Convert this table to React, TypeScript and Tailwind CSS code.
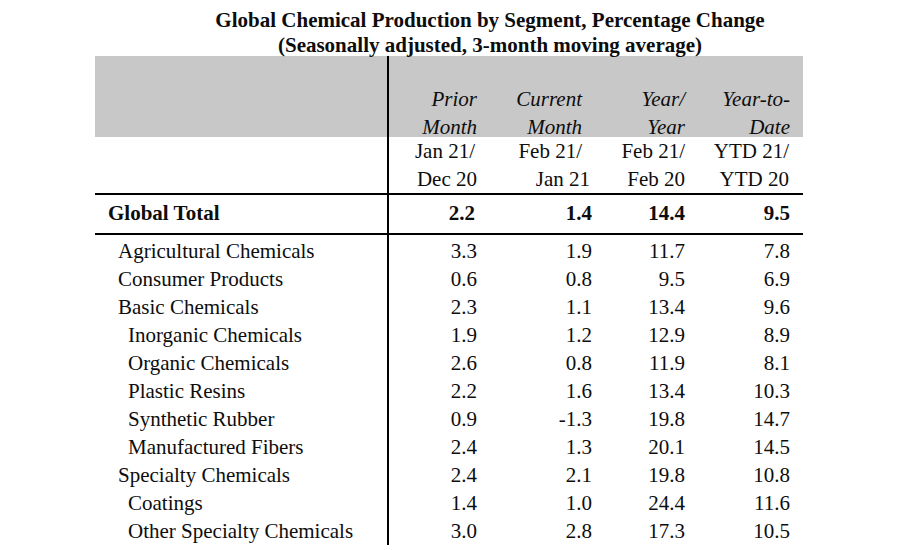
type Row = {
  label: string;
  level: 1 | 2;
  values: [string, string, string, string];
};

const rows: Row[] = [
  { label: "Agricultural Chemicals", level: 1, values: ["3.3", "1.9", "11.7", "7.8"] },
  { label: "Consumer Products", level: 1, values: ["0.6", "0.8", "9.5", "6.9"] },
  { label: "Basic Chemicals", level: 1, values: ["2.3", "1.1", "13.4", "9.6"] },
  { label: "Inorganic Chemicals", level: 2, values: ["1.9", "1.2", "12.9", "8.9"] },
  { label: "Organic Chemicals", level: 2, values: ["2.6", "0.8", "11.9", "8.1"] },
  { label: "Plastic Resins", level: 2, values: ["2.2", "1.6", "13.4", "10.3"] },
  { label: "Synthetic Rubber", level: 2, values: ["0.9", "-1.3", "19.8", "14.7"] },
  { label: "Manufactured Fibers", level: 2, values: ["2.4", "1.3", "20.1", "14.5"] },
  { label: "Specialty Chemicals", level: 1, values: ["2.4", "2.1", "19.8", "10.8"] },
  { label: "Coatings", level: 2, values: ["1.4", "1.0", "24.4", "11.6"] },
  { label: "Other Specialty Chemicals", level: 2, values: ["3.0", "2.8", "17.3", "10.5"] },
];

// right padding per numeric column so the digits land on the source's edges
const numPad = ["pr-0", "pr-0", "pr-0", "pr-[13px]"];

export default function App() {
  return (
    <div className="h-[550px] w-[900px] overflow-hidden bg-white font-['Liberation_Serif','Times_New_Roman',serif] text-[21px] text-[#0d0d0d]">
      {/* Title */}
      <div className="h-[56px] pl-[80px] pt-[8px] text-center text-[21px] font-bold leading-[25px]">
        <p>Global Chemical Production by Segment, Percentage Change</p>
        <p>(Seasonally adjusted, 3-month moving average)</p>
      </div>

      <div className="pl-[95px]">
        <table className="table-fixed border-collapse leading-[28px]">
          <colgroup>
            <col className="w-[293px]" />
            <col className="w-[89px]" />
            <col className="w-[115px]" />
            <col className="w-[93px]" />
            <col className="w-[118px]" />
          </colgroup>
          <thead>
            {/* Column names on the grey band */}
            <tr className="h-[81px] bg-[#c8c8c8] italic">
              <th className="border-r-2 border-black p-0" />
              <th className="p-0 pt-[29px] text-right align-top font-normal">
                <div className="h-[52px]">
                  <div>Prior</div>
                  <div>Month</div>
                </div>
              </th>
              <th className="p-0 pr-[10px] pt-[29px] text-right align-top font-normal">
                <div className="h-[52px]">
                  <div>Current</div>
                  <div>Month</div>
                </div>
              </th>
              <th className="p-0 pt-[29px] text-right align-top font-normal">
                <div className="h-[52px]">
                  <div>Year/</div>
                  <div>Year</div>
                </div>
              </th>
              <th className="p-0 pr-[13px] pt-[29px] text-right align-top font-normal">
                <div className="h-[52px]">
                  <div>Year-to-</div>
                  <div>Date</div>
                </div>
              </th>
            </tr>
            {/* Period rows */}
            <tr className="border-b-2 border-black">
              <th className="border-r-2 border-black p-0" />
              <th className="p-0 text-right font-normal">
                <div className="pr-[2px]">Jan 21/</div>
                <div>Dec 20</div>
              </th>
              <th className="p-0 text-right font-normal">
                <div className="pr-[10px]">Feb 21/</div>
                <div className="pr-[2px]">Jan 21</div>
              </th>
              <th className="p-0 text-right font-normal">
                <div>Feb 21/</div>
                <div>Feb 20</div>
              </th>
              <th className="p-0 pr-[14px] text-right font-normal">
                <div>YTD 21/</div>
                <div>YTD 20</div>
              </th>
            </tr>
          </thead>
          <tbody>
            <tr className="h-[40px] border-b-2 border-black font-bold">
              <td className="border-r-2 border-black p-0 pb-[2px] pl-[13px]">Global Total</td>
              <td className="p-0 pb-[2px] pr-[2px] text-right">2.2</td>
              <td className="p-0 pb-[2px] text-right">1.4</td>
              <td className="p-0 pb-[2px] text-right">14.4</td>
              <td className="p-0 pb-[2px] pr-[13px] text-right">9.5</td>
            </tr>
            {rows.map((row, i) => (
              <tr key={row.label} className={i === 0 ? "h-[31px] align-bottom" : "h-[28px]"}>
                <td
                  className={`border-r-2 border-black p-0 ${
                    row.level === 1 ? "pl-[23px]" : "pl-[33px]"
                  }`}
                >
                  {row.label}
                </td>
                {row.values.map((v, j) => (
                  <td key={j} className={`p-0 text-right ${numPad[j]}`}>
                    {v}
                  </td>
                ))}
              </tr>
            ))}
          </tbody>
        </table>
      </div>
    </div>
  );
}
